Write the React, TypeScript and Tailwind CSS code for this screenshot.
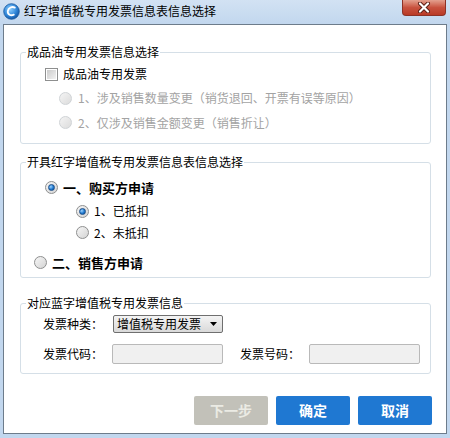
import React from 'react';

const font = { fontFamily: '"Noto Sans CJK SC", "Noto Sans", sans-serif' };

function Radio({ checked = false, disabled = false }: { checked?: boolean; disabled?: boolean }) {
  const ring = disabled ? 'border-[#cfd3d6] bg-gradient-to-br from-[#f4f4f4] to-[#dcdcdc]' : 'border-[#8e8f8f] bg-gradient-to-br from-[#f6f6f6] to-[#d4d4d4]';
  return (
    <span className={`flex h-[13px] w-[13px] shrink-0 items-center justify-center rounded-full border ${ring}`}>
      {checked && (
        <span className="h-[7px] w-[7px] rounded-full border border-[#1c4f8a] bg-[radial-gradient(circle_at_35%_35%,#9fd4ff,#1f79d0_55%,#0d4a8f)]" />
      )}
    </span>
  );
}

function Checkbox() {
  return (
    <span className="flex h-[13px] w-[13px] shrink-0 items-center justify-center border border-[#8e8f8f] bg-white">
      <span className="h-[9px] w-[9px] bg-gradient-to-br from-[#cbcbcb] to-[#f2f2f2]" />
    </span>
  );
}

function Group({ title, className, children }: { title: string; className: string; children: React.ReactNode }) {
  return (
    <fieldset className={`mx-[15px] ml-[16px] rounded-[3px] border border-[#d5dfe7] ${className}`}>
      <legend className="ml-[5px] px-[1px] text-[12px] leading-[14px] text-black">{title}</legend>
      {children}
    </fieldset>
  );
}

export default function App() {
  return (
    <div className="flex h-[438px] w-[450px] flex-col bg-[#c2d7ee] px-[3px] pb-[4px]" style={font}>
      {/* title bar */}
      <div className="relative flex h-[24px] shrink-0 items-center bg-gradient-to-b from-[#d2e2f3] to-[#c2d7ee] -mx-[3px] px-[3px]">
        <svg width="17" height="17" viewBox="0 0 17 17" className="mt-[-2px]">
          <defs>
            <radialGradient id="ic" cx="40%" cy="35%" r="70%">
              <stop offset="0" stopColor="#8fd0ff" />
              <stop offset="0.6" stopColor="#2f86d8" />
              <stop offset="1" stopColor="#0f4f9c" />
            </radialGradient>
          </defs>
          <circle cx="8.5" cy="8.5" r="7.8" fill="url(#ic)" stroke="#1b5aa0" strokeWidth="0.8" />
          <path d="M11.8 4.6 C9.2 3.2 5.2 4.6 4.8 8.2 C4.4 11.6 7.8 13.2 10.8 11.6" fill="none" stroke="#fff" strokeWidth="1.8" strokeLinecap="round" />
        </svg>
        <span className="ml-[4px] mt-[-2px] text-[12px] leading-[14px] text-black">红字增值税专用发票信息表信息选择</span>
        <div className="absolute right-[4px] top-0 flex h-[16px] w-[44px] items-center justify-center rounded-b-[4px] border border-t-0 border-[#8d3226] bg-gradient-to-b from-[#e3a08f] via-[#c8523f] to-[#b93a25]">
          <svg width="14" height="11" viewBox="0 0 14 11">
            <path d="M3 1.5 L11 9.5 M11 1.5 L3 9.5" stroke="#5a1d14" strokeWidth="4" strokeLinecap="round" />
            <path d="M3 1.5 L11 9.5 M11 1.5 L3 9.5" stroke="#ffffff" strokeWidth="2.2" strokeLinecap="round" />
          </svg>
        </div>
      </div>

      {/* client area */}
      <div className="flex flex-1 flex-col border border-[#6d7c8b] bg-white">
        <Group title="成品油专用发票信息选择" className="mt-[20px] pb-[8px]">
          <div className="mt-[3px] flex h-[24px] items-center pl-[24px]">
            <Checkbox />
            <span className="ml-[5px] text-[12px] leading-[14px] text-black">成品油专用发票</span>
          </div>
          <div className="flex h-[24px] items-center pl-[38px]">
            <Radio disabled />
            <span className="ml-[6px] text-[12px] leading-[14px] text-[#a3a3a3]">1、涉及销售数量变更（销货退回、开票有误等原因）</span>
          </div>
          <div className="flex h-[25px] items-center pl-[38px]">
            <Radio disabled />
            <span className="ml-[6px] text-[12px] leading-[14px] text-[#a3a3a3]">2、仅涉及销售金额变更（销售折让）</span>
          </div>
        </Group>

        <Group title="开具红字增值税专用发票信息表信息选择" className="mt-[11px] pb-[3px]">
          <div className="mt-[6px] flex h-[24px] items-center pl-[24px]">
            <Radio checked />
            <span className="ml-[5px] text-[13px] font-bold leading-[15px] text-black">一、购买方申请</span>
          </div>
          <div className="mt-[1px] flex h-[22px] items-center pl-[55px]">
            <Radio checked />
            <span className="ml-[5px] text-[12px] leading-[14px] text-black">1、已抵扣</span>
          </div>
          <div className="flex h-[21px] items-center pl-[55px]">
            <Radio />
            <span className="ml-[5px] text-[12px] leading-[14px] text-black">2、未抵扣</span>
          </div>
          <div className="mt-[7px] flex h-[24px] items-center pl-[13px]">
            <Radio />
            <span className="ml-[5px] text-[13px] font-bold leading-[15px] text-black">二、销售方申请</span>
          </div>
        </Group>

        <Group title="对应蓝字增值税专用发票信息" className="mt-[18px] pb-[9px]">
          <div className="mt-[4px] flex h-[20px] items-center pl-[22px]">
            <span className="w-[70px] text-[12px] leading-[14px] text-black">发票种类：</span>
            <div className="flex h-[18px] w-[110px] items-center justify-between rounded-[2px] border border-[#6f6f6f] bg-gradient-to-b from-[#f4f4f4] to-[#d9d9d9] pl-[3px] pr-[5px]">
              <span className="text-[12px] leading-[14px] text-black">增值税专用发票</span>
              <svg width="7" height="4" viewBox="0 0 7 4">
                <path d="M0 0 H7 L3.5 4 Z" fill="#000" />
              </svg>
            </div>
          </div>
          <div className="mt-[10px] flex h-[20px] items-center pl-[22px]">
            <span className="w-[69px] text-[12px] leading-[14px] text-black">发票代码：</span>
            <div className="h-[20px] w-[111px] rounded-[2px] border border-[#b9b9b9] bg-[#f0f0f0]" />
            <span className="ml-[17px] w-[69px] text-[12px] leading-[14px] text-black">发票号码：</span>
            <div className="h-[20px] w-[111px] rounded-[2px] border border-[#b9b9b9] bg-[#f0f0f0]" />
          </div>
        </Group>

        <div className="mt-[22px] flex justify-end gap-[8px] pr-[14px]">
          <button className="h-[29px] w-[74px] rounded-[2px] bg-[#c2c1b9] text-[14px] font-bold text-[#ebebe4]">下一步</button>
          <button className="h-[29px] w-[74px] rounded-[2px] bg-[#1f78d2] text-[14px] font-bold text-white">确定</button>
          <button className="h-[29px] w-[74px] rounded-[2px] bg-[#1f78d2] text-[14px] font-bold text-white">取消</button>
        </div>
      </div>
    </div>
  );
}
